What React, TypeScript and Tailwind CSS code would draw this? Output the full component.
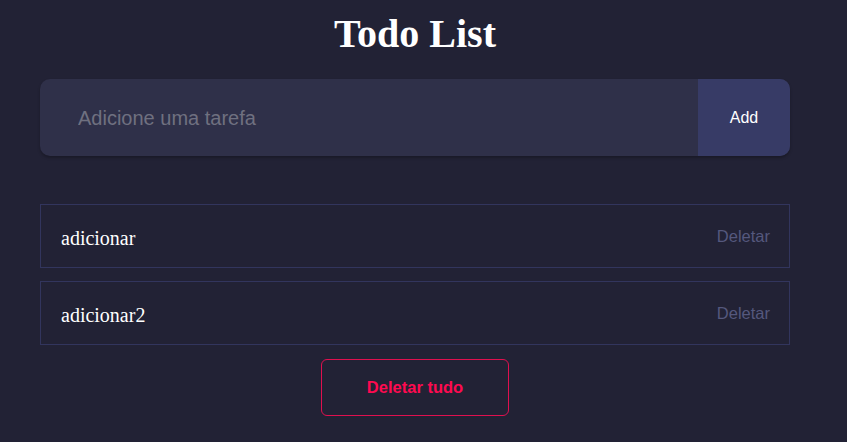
export default function App() {
  const todos = ['adicionar', 'adicionar2']

  return (
    <div className="min-h-[442px] w-full bg-[#222235]">
      <div className="w-[830px]">
        <div className="mx-auto w-[750px] flex flex-col">
          {/* Title */}
          <h1 className="text-center text-[40px] font-bold text-white leading-none pt-[14px] font-['Liberation_Serif',serif]">
            Todo List
          </h1>

          {/* Input */}
          <div className="mt-[25px] flex h-[77px] rounded-[10px] overflow-hidden bg-[#2f3049] shadow-[0_2px_3px_rgba(0,0,0,0.25)]">
            <input
              placeholder="Adicione uma tarefa"
              className="flex-1 bg-transparent pl-[38px] text-[20px] text-white placeholder:text-[#6f7080] outline-none font-['Liberation_Sans',sans-serif]"
            />
            <button className="w-[92px] bg-[#373b66] text-white text-[16px] font-['Liberation_Sans',sans-serif]">
              Add
            </button>
          </div>

          {/* List */}
          <ul className="mt-[48px] flex flex-col gap-[13px]">
            {todos.map(todo => (
              <li
                key={todo}
                className="flex h-[64px] items-center justify-between border border-[#32355d] pl-[20px] pr-[19px]"
              >
                <span className="text-[20px] text-white pt-[3px] font-['Liberation_Serif',serif]">{todo}</span>
                <button className="text-[16.5px] text-[#55587d] font-['Liberation_Sans',sans-serif]">
                  Deletar
                </button>
              </li>
            ))}
          </ul>

          <button className="mx-auto mt-[14px] h-[57px] w-[188px] rounded-[6px] border border-[#e0104f] text-[16.5px] font-bold text-[#ff0a50] font-['Liberation_Sans',sans-serif]">
            Deletar tudo
          </button>
        </div>
      </div>
    </div>
  )
}
